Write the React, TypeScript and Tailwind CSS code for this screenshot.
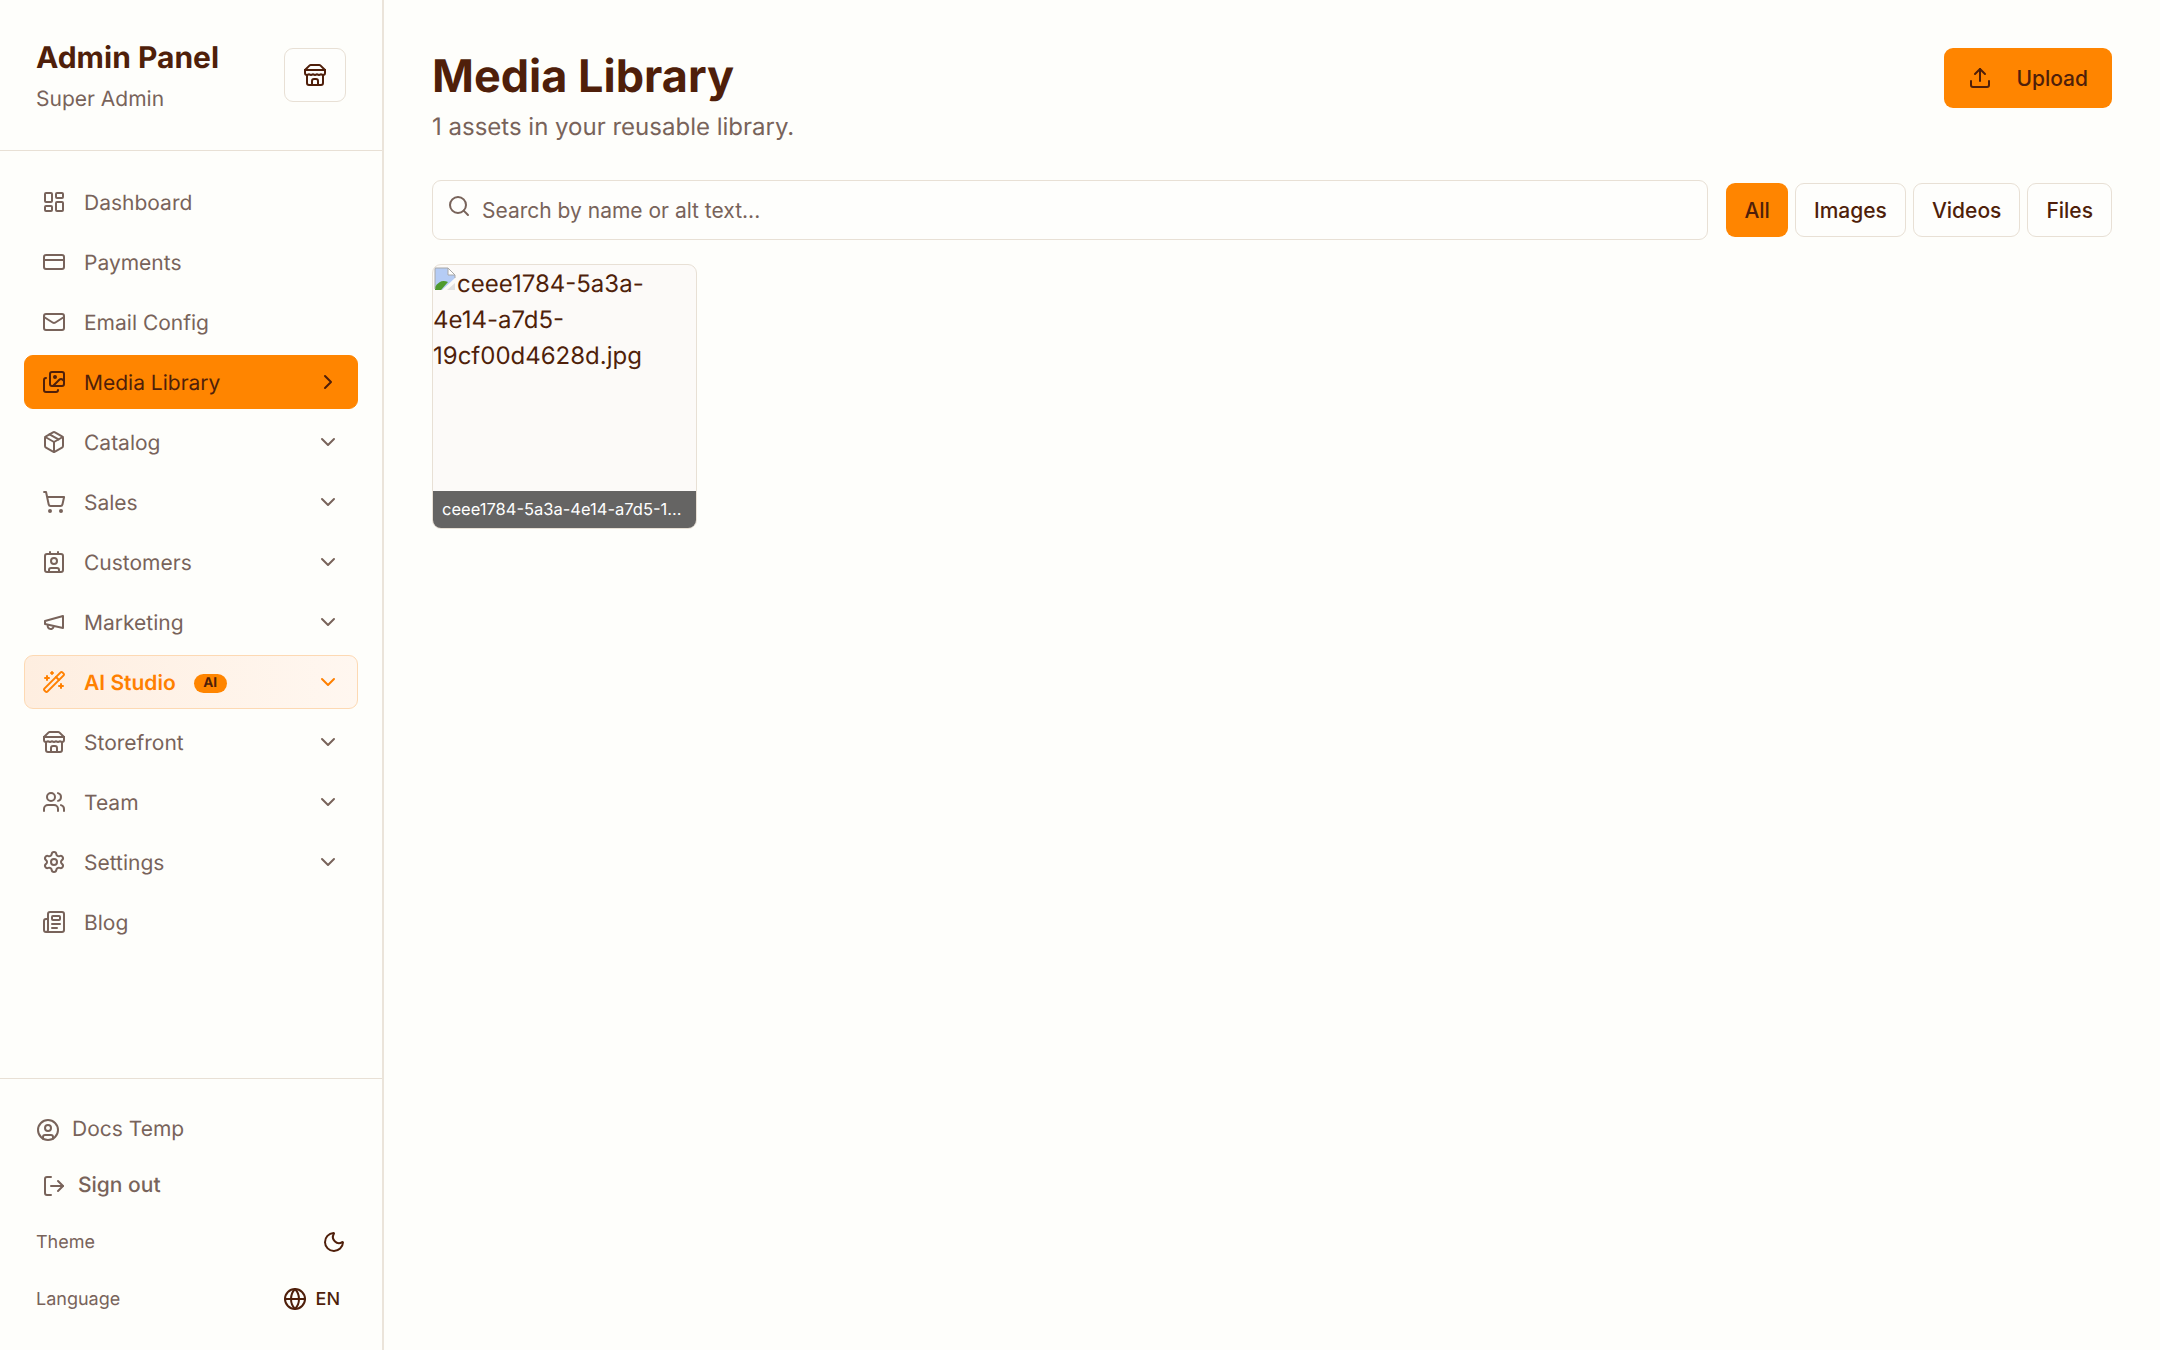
import {
  ChevronDown,
  ChevronRight,
  CircleUser,
  Contact,
  CreditCard,
  Globe,
  Images,
  LayoutDashboard,
  LogOut,
  Mail,
  Moon,
  Newspaper,
  Package,
  Search,
  Settings,
  ShoppingCart,
  Upload,
  Users,
  WandSparkles,
} from 'lucide-react'

type IconProps = { size?: number; className?: string; strokeWidth?: number }

function StoreIcon({ size = 24, className, strokeWidth = 2 }: IconProps) {
  return (
    <svg width={size} height={size} viewBox="0 0 24 24" fill="none" stroke="currentColor" strokeWidth={strokeWidth} strokeLinecap="round" strokeLinejoin="round" className={className}>
      <path d="m2 7 4.41-4.41A2 2 0 0 1 7.83 2h8.34a2 2 0 0 1 1.42.59L22 7" />
      <path d="M4 12v8a2 2 0 0 0 2 2h12a2 2 0 0 0 2-2v-8" />
      <path d="M15 22v-4a2 2 0 0 0-2-2h-2a2 2 0 0 0-2 2v4" />
      <path d="M2 7h20" />
      <path d="M22 7v3a2 2 0 0 1-2 2a2.7 2.7 0 0 1-1.59-.63.7.7 0 0 0-.82 0A2.7 2.7 0 0 1 16 12a2.7 2.7 0 0 1-1.59-.63.7.7 0 0 0-.82 0A2.7 2.7 0 0 1 12 12a2.7 2.7 0 0 1-1.59-.63.7.7 0 0 0-.82 0A2.7 2.7 0 0 1 8 12a2.7 2.7 0 0 1-1.59-.63.7.7 0 0 0-.82 0A2.7 2.7 0 0 1 4 12a2 2 0 0 1-2-2V7" />
    </svg>
  )
}

function MegaphoneIcon({ size = 24, className, strokeWidth = 2 }: IconProps) {
  return (
    <svg width={size} height={size} viewBox="0 0 24 24" fill="none" stroke="currentColor" strokeWidth={strokeWidth} strokeLinecap="round" strokeLinejoin="round" className={className}>
      <path d="m3 11 18-5v12L3 14v-3z" />
      <path d="M11.6 16.8a3 3 0 1 1-5.8-1.6" />
    </svg>
  )
}

const navItems = [
  { label: 'Dashboard', icon: LayoutDashboard },
  { label: 'Payments', icon: CreditCard },
  { label: 'Email Config', icon: Mail },
  { label: 'Media Library', icon: Images, active: true },
  { label: 'Catalog', icon: Package, sub: true },
  { label: 'Sales', icon: ShoppingCart, sub: true },
  { label: 'Customers', icon: Contact, sub: true },
  { label: 'Marketing', icon: MegaphoneIcon, sub: true },
  { label: 'AI Studio', icon: WandSparkles, sub: true, ai: true },
  { label: 'Storefront', icon: StoreIcon, sub: true },
  { label: 'Team', icon: Users, sub: true },
  { label: 'Settings', icon: Settings, sub: true },
  { label: 'Blog', icon: Newspaper },
]

function BrokenImage() {
  return (
    <svg width="24" height="24" viewBox="0 0 24 24" className="inline-block align-[1px]">
      <path d="M2 1h13v7h7v3L9 23H2z" fill="#b5ccf5" />
      <path d="M15 1v7h7z" fill="#fff" />
      <path d="M2 23v-3c4-6 8-7 13-5l-7 8z" fill="#4f9a2e" />
      <path d="M2 22V1h13l7 7v3" fill="none" stroke="#a8a8a8" />
      <path d="M15 1v7h7" fill="none" stroke="#a8a8a8" />
      <path d="M14 23l8-7v7z" fill="#e0e0e0" />
    </svg>
  )
}

function NavRow({ item }: { item: (typeof navItems)[number] }) {
  const Icon = item.icon
  let cls = 'text-[#78635a] border-transparent'
  if (item.active) cls = 'bg-[#ff8500] text-[#4f1f0a] border-[#ff8500]'
  if (item.ai) cls = 'bg-gradient-to-r from-[#feeee0] to-[#fff7f0] text-[#ff8000] border-[#fdd9b3] font-semibold'

  return (
    <div className={`flex h-[54px] items-center gap-[18px] rounded-[9px] border px-[17px] text-[21px] ${cls}`}>
      <Icon size={24} strokeWidth={2} className="shrink-0" />
      <span className="mt-[2px] leading-none">{item.label}</span>
      {item.ai && (
        <span className="mt-[2px] rounded-full bg-[#ff8500] px-[9.5px] py-[2px] text-[13.5px] font-bold leading-[15px] text-[#4f1f0a]">
          AI
        </span>
      )}
      {item.active && <ChevronRight size={24} className="ml-auto shrink-0" />}
      {item.sub && <ChevronDown size={24} className="ml-auto shrink-0" />}
    </div>
  )
}

export default function App() {
  return (
    <div className="flex h-screen bg-[#fefefb] font-['Inter',sans-serif] text-[#4f1f0a] [text-rendering:geometricPrecision]">
      {/* Sidebar */}
      <aside className="flex h-full w-[384px] shrink-0 flex-col border-r-2 border-[#ebe4da]">
        <div className="flex h-[151px] items-center justify-between border-b border-[#e8e0d5] px-[36px]">
          <div className="pt-[2px]">
            <div className="text-[30px] font-bold leading-[42px]">Admin Panel</div>
            <div className="mt-[5px] text-[21px] leading-[32px] text-[#78635a]">Super Admin</div>
          </div>
          <button className="flex h-[54px] w-[62px] items-center justify-center rounded-[9px] border border-[#e8e0d5] bg-[#fefefc]">
            <StoreIcon size={24} />
          </button>
        </div>

        <nav className="flex flex-1 flex-col gap-[6px] p-[24px]">
          {navItems.map(item => (
            <NavRow key={item.label} item={item} />
          ))}
        </nav>

        <div className="border-t border-[#e8e0d5] px-[36px] pb-[27px] pt-[27px]">
          <div className="flex h-[48px] items-center gap-[12px] text-[21px] text-[#78635a]">
            <CircleUser size={24} />
            <span>Docs Temp</span>
          </div>
          <div className="mt-[8px] flex h-[48px] items-center gap-[12px] pl-[6px] text-[21px] font-medium text-[#78635a]">
            <LogOut size={24} />
            <span>Sign out</span>
          </div>
          <div className="mt-[8px] flex h-[48px] items-center justify-between text-[18px] text-[#78635a]">
            <span>Theme</span>
            <Moon size={24} className="text-[#4f1f0a]" />
          </div>
          <div className="mt-[9px] flex h-[48px] items-center justify-between text-[18px] text-[#78635a]">
            <span>Language</span>
            <span className="mr-[6px] flex items-center gap-[9px] font-medium text-[#4f1f0a]">
              <Globe size={24} />
              EN
            </span>
          </div>
        </div>
      </aside>

      {/* Main */}
      <main className="min-w-0 flex-1 px-[48px] pt-[48px]">
        <div className="flex items-start justify-between">
          <div>
            <h1 className="mt-[1px] text-[45px] font-bold leading-[54px]">Media Library</h1>
            <p className="mt-[6px] text-[24px] leading-[36px] text-[#78635a]">1 assets in your reusable library.</p>
          </div>
          <button className="flex h-[60px] items-center gap-[24px] rounded-[9px] bg-[#ff8500] px-[24px] text-[21px] font-medium">
            <Upload size={24} />
            <span className="mt-[1px]">Upload</span>
          </button>
        </div>

        <div className="mt-[35px] flex items-center gap-[18px]">
          <div className="relative flex-1">
            <Search size={24} className="absolute left-[15px] top-[14px] text-[#78635a]" />
            <input
              placeholder="Search by name or alt text..."
              className="h-[60px] w-full rounded-[9px] border border-[#e8e0d5] bg-[#fefefc] pb-[-1px] pl-[49px] pt-[1px] text-[21px] outline-none placeholder:text-[#78635a]"
            />
          </div>
          <div className="flex gap-[7px]">
            <button className="h-[54px] rounded-[9px] bg-[#ff8500] px-[18px] pt-[1px] text-[21px] font-medium">All</button>
            <button className="h-[54px] rounded-[9px] border border-[#e8e0d5] bg-[#fefefc] px-[18px] pt-[1px] text-[21px] font-medium">Images</button>
            <button className="h-[54px] rounded-[9px] border border-[#e8e0d5] bg-[#fefefc] px-[18px] pt-[1px] text-[21px] font-medium">Videos</button>
            <button className="h-[54px] rounded-[9px] border border-[#e8e0d5] bg-[#fefefc] px-[18px] pt-[1px] text-[21px] font-medium">Files</button>
          </div>
        </div>

        <div className="mt-[24px] grid grid-cols-6 gap-[18px]">
          <div className="relative aspect-square overflow-hidden rounded-[9px] border border-[#e8e0d5] bg-[#fcfaf8]">
            <div className="pt-[1px] text-[24px] leading-[36px]">
              <BrokenImage />
              ceee1784-5a3a-4e14-a7d5-19cf00d4628d.jpg
            </div>
            <div className="absolute inset-x-0 bottom-0 truncate bg-black/60 p-[9px] text-[16.5px] leading-[19px] text-white">
              ceee1784-5a3a-4e14-a7d5-19cf00d4628d.jpg
            </div>
          </div>
        </div>
      </main>
    </div>
  )
}
